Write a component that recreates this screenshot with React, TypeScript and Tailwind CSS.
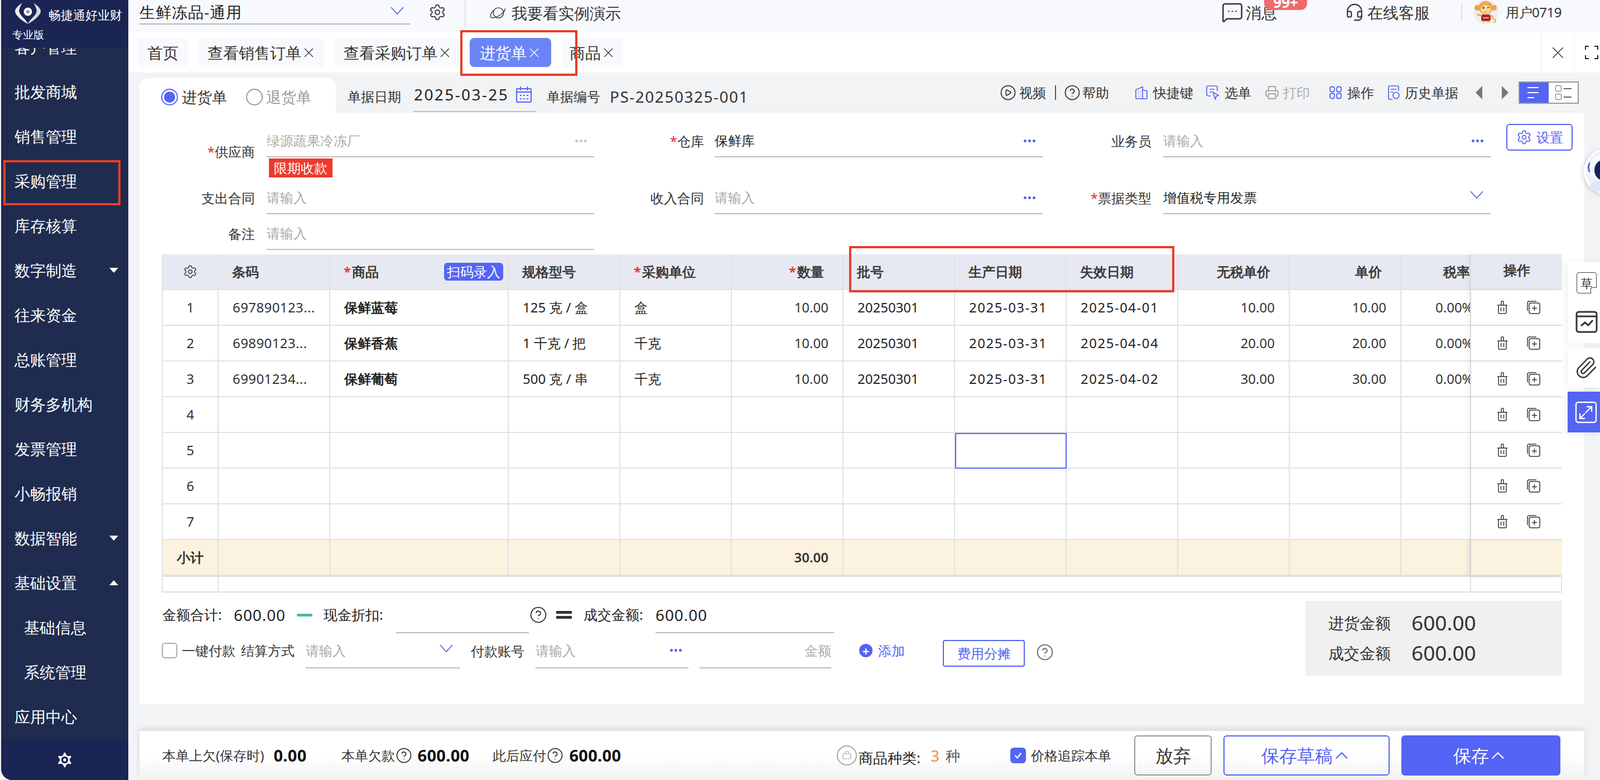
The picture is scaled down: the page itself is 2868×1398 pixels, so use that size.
import * as React from "react";
import {
  ChevronUp,
  CircleHelp,
  CirclePlay,
  Headset,
  MessageSquareMore,
  Paperclip,
  Printer,
  Settings,
} from "lucide-react";

const BLUE = "#5464f5";

const navItems = [
  { label: "客户管理" },
  { label: "批发商城" },
  { label: "销售管理" },
  { label: "采购管理" },
  { label: "库存核算" },
  { label: "数字制造", caret: "down" },
  { label: "往来资金" },
  { label: "总账管理" },
  { label: "财务多机构" },
  { label: "发票管理" },
  { label: "小畅报销" },
  { label: "数据智能", caret: "down" },
  { label: "基础设置", caret: "up" },
  { label: "基础信息", sub: true },
  { label: "系统管理", sub: true },
  { label: "应用中心" },
];

const goods = [
  ["697890123...", "保鲜蓝莓", "125 克 / 盒", "盒", "10.00", "20250301", "2025-03-31", "2025-04-01", "10.00", "10.00", "0.00%"],
  ["69890123...", "保鲜香蕉", "1 千克 / 把", "千克", "10.00", "20250301", "2025-03-31", "2025-04-04", "20.00", "20.00", "0.00%"],
  ["69901234...", "保鲜葡萄", "500 克 / 串", "千克", "10.00", "20250301", "2025-03-31", "2025-04-02", "30.00", "30.00", "0.00%"],
];

const rowGrid =
  "grid h-[64px] grid-cols-[102px_200px_320px_200px_200px_200px_200px_200px_200px_200px_200px_125px_163px]";

function Cross({ className = "h-[17px] w-[17px]" }: { className?: string }) {
  return (
    <svg viewBox="0 0 16 16" className={className} fill="none" stroke="currentColor" strokeWidth="1.2">
      <path d="M1 1L15 15M15 1L1 15" />
    </svg>
  );
}

function Chevron({ className = "" }: { className?: string }) {
  return (
    <svg viewBox="0 0 24 14" className={`h-[14px] w-[24px] ${className}`} fill="none" stroke={BLUE} strokeWidth="1.8">
      <path d="M1 1L12 13L23 1" />
    </svg>
  );
}

function Dots({ gray }: { gray?: boolean }) {
  const dot = `h-[5px] w-[5px] rounded-full ${gray ? "bg-[#c4c7d6]" : "bg-[#5464f5]"}`;
  return (
    <div className="flex gap-[3px]">
      <span className={dot} />
      <span className={dot} />
      <span className={dot} />
    </div>
  );
}

function Help({ className = "h-[32px] w-[32px] text-[#555]" }: { className?: string }) {
  return <CircleHelp className={className} strokeWidth={1.4} />;
}

function Logo() {
  return (
    <svg viewBox="0 0 46 38" className="h-[38px] w-[46px]">
      <path d="M13 0C6 5 0 10 0 15C0 22 12 32 23 38C20 30 12 26 8 18C6 13 9 7 13 0Z" fill="#ececf0" />
      <path d="M33 0C40 5 46 10 46 15C46 22 34 32 23 38C26 30 34 26 38 18C40 13 37 7 33 0Z" fill="#d9d9de" />
      <circle cx="23" cy="16" r="7.5" fill="#f2f2f4" />
      <circle cx="23" cy="16" r="2.6" fill="#7d8296" />
    </svg>
  );
}

function Monkey() {
  return (
    <svg viewBox="0 0 46 46" className="h-[46px] w-[46px]">
      <circle cx="23" cy="23" r="22.5" fill="#eeeeee" />
      <circle cx="7" cy="15" r="5" fill="#e9a544" />
      <circle cx="37" cy="15" r="5" fill="#e9a544" />
      <path d="M33 34C41 34 42 41 36 41" fill="none" stroke="#eba94c" strokeWidth="2.2" />
      <rect x="14" y="27" width="17" height="12" rx="3" fill="#a8282b" />
      <path d="M14 29L8 27M31 29L35 31" stroke="#eba94c" strokeWidth="3" strokeLinecap="round" />
      <rect x="16" y="38" width="4" height="3" fill="#eba94c" />
      <rect x="25" y="38" width="4" height="3" fill="#eba94c" />
      <ellipse cx="22" cy="15" rx="12.5" ry="12" fill="#eba94c" />
      <ellipse cx="22" cy="18" rx="9" ry="8" fill="#f6d79e" />
      <circle cx="18" cy="15" r="1.7" fill="#5a3a2a" />
      <path d="M25 14.5h3.4" stroke="#5a3a2a" strokeWidth="1.4" />
      <path d="M19 22q3 2.4 6 0" fill="#fff" stroke="#b0662c" strokeWidth="0.8" />
      <rect x="17.5" y="32" width="10" height="1.6" fill="#f3d6c8" />
    </svg>
  );
}

function Robot() {
  return (
    <svg viewBox="0 0 82 82" className="h-[82px] w-[82px]">
      <circle cx="41" cy="41" r="39" fill="#eef1fb" stroke="#ffffff" strokeWidth="3" />
      <ellipse cx="11" cy="34" rx="4" ry="9" fill="#4b63d8" />
      <ellipse cx="32" cy="34" rx="22" ry="23" fill="#f8f9ff" />
      <ellipse cx="34" cy="39" rx="15" ry="18" fill="#15245e" />
      <circle cx="38" cy="41" r="6" fill="#55c4fb" />
      <ellipse cx="26" cy="68" rx="15" ry="9" fill="#dfe5f7" />
    </svg>
  );
}

function TrashIcon() {
  return (
    <svg viewBox="0 0 20 24" className="h-[24px] w-[20px]" fill="none" stroke="#333" strokeWidth="1.5">
      <path d="M1 8H19M8 8V2.5a2 2 0 0 1 4 0V8" />
      <path d="M3 8V21a2 2 0 0 0 2 2H15a2 2 0 0 0 2-2V8" />
      <path d="M7.5 12V19M12.5 12V19" />
    </svg>
  );
}

function CopyAddIcon() {
  return (
    <svg viewBox="0 0 24 24" className="h-[24px] w-[24px]" fill="none" stroke="#333" strokeWidth="1.5">
      <rect x="4" y="4" width="19" height="19" rx="3" />
      <path d="M1 18V4a3 3 0 0 1 3-3H17M13.5 9V18M9 13.5H18" />
    </svg>
  );
}

function PlanetIcon() {
  return (
    <svg viewBox="0 0 30 24" className="h-[24px] w-[29px]" fill="none" stroke="#333" strokeWidth="1.5">
      <circle cx="16" cy="11" r="9.5" />
      <path d="M7 6C2 11 0 17 2 19C5 22 14 19 22 13C26 10 29 5 28 3" />
    </svg>
  );
}

function CalendarIcon() {
  return (
    <svg viewBox="0 0 28 30" className="h-[30px] w-[28px]" fill="none" stroke={BLUE} strokeWidth="2">
      <rect x="1" y="5" width="26" height="24" rx="1.5" />
      <path d="M8 1V8M20 1V8M1 11H27" />
      <path d="M7 17H10M13 17H16M19 17H22M7 23H10M13 23H16M19 23H22" />
    </svg>
  );
}

function ShortcutIcon() {
  return (
    <svg viewBox="0 0 22 24" className="h-[24px] w-[22px]" fill="none" stroke={BLUE} strokeWidth="1.7">
      <path d="M1 7L13 1.5V23H3a2 2 0 0 1-2-2ZM13 7L21 9V21a2 2 0 0 1-2 2H13" />
      <path d="M5 10H6M8.5 10H9.5M5 14H6M8.5 14H9.5M5 18H6M8.5 18H9.5" />
    </svg>
  );
}

function PickIcon() {
  return (
    <svg viewBox="0 0 24 26" className="h-[26px] w-[24px]" fill="none" stroke={BLUE} strokeWidth="1.7">
      <path d="M8 19H4a3 3 0 0 1-3-3V4a3 3 0 0 1 3-3H17a3 3 0 0 1 3 3V10" />
      <path d="M6 7H15M6 12H10" />
      <path d="M12 12L22 18L18 19.5L16.5 25Z" />
    </svg>
  );
}

function GridIcon() {
  return (
    <svg viewBox="0 0 22 24" className="h-[24px] w-[22px]" fill="none" stroke={BLUE} strokeWidth="1.8">
      <rect x="1" y="1.5" width="8" height="9" rx="3" />
      <rect x="13" y="1.5" width="8" height="9" rx="3" />
      <rect x="1" y="13.5" width="8" height="9" rx="3" />
      <rect x="13" y="13.5" width="8" height="9" rx="3" />
    </svg>
  );
}

function HistoryIcon() {
  return (
    <svg viewBox="0 0 22 26" className="h-[26px] w-[22px]" fill="none" stroke={BLUE} strokeWidth="1.7">
      <path d="M8 25H3a2 2 0 0 1-2-2V3a2 2 0 0 1 2-2H17a2 2 0 0 1 2 2V10" />
      <path d="M5 7H15M5 12H10" />
      <circle cx="14.5" cy="18" r="5.5" />
    </svg>
  );
}

function CheckMark() {
  return (
    <svg viewBox="0 0 20 20" className="h-[18px] w-[18px]" fill="none" stroke="#fff" strokeWidth="2.6">
      <path d="M4 10L8.5 15L16 5" />
    </svg>
  );
}

function Tab({ label, width, active, close = true }: { label: string; width: string; active?: boolean; close?: boolean }) {
  return (
    <div
      className={`flex h-[52px] items-center gap-[5px] rounded-lg text-[28px] ${width} ${
        active ? "bg-[#6b84f6] text-white" : "bg-[#f7f9fd] text-[#333]"
      }`}
    >
      <span className="whitespace-nowrap">{label}</span>
      {close && <Cross />}
    </div>
  );
}

function Field({
  label,
  required,
  value,
  placeholder,
  trailing,
  labelClass,
  inputClass,
  labelTop,
}: {
  label: string;
  required?: boolean;
  value?: string;
  placeholder?: string;
  trailing?: "dots" | "dim" | "chevron";
  labelClass: string;
  inputClass: string;
  labelTop?: boolean;
}) {
  return (
    <div className="flex items-start">
      <div
        className={`flex h-[42px] items-center justify-end text-[24px] text-[#333] ${labelClass} ${
          labelTop ? "mt-[19px]" : ""
        }`}
      >
        {required && <span className="text-[#f02c1e]">*</span>}
        {label}
      </div>
      <div
        className={`flex h-[50px] items-center justify-between border-b-2 border-[#bdbdbd] pb-[8px] pr-[13px] text-[24px] ${inputClass}`}
      >
        <span className={value ? "text-[#222]" : "text-[#aaa]"}>{value || placeholder}</span>
        {trailing === "dots" && <Dots />}
        {trailing === "dim" && <Dots gray />}
        {trailing === "chevron" && <Chevron className="mb-[10px]" />}
      </div>
    </div>
  );
}

function Cell({
  children,
  className = "",
  first,
}: {
  children?: React.ReactNode;
  className?: string;
  first?: boolean;
}) {
  return (
    <div
      className={`flex items-center overflow-hidden whitespace-nowrap border-b-2 border-r-2 border-[#e2e2e2] ${
        first ? "border-l-2" : ""
      } ${className}`}
    >
      {children}
    </div>
  );
}

function Star() {
  return <span className="mr-[2px] text-[#f02c1e]">*</span>;
}

function GoodsTable() {
  const head = "border-[#c9c9c9] border-b-0 bg-[#e7e9f2] text-[24px] font-semibold text-[#3a3a3a]";
  const left = "pl-[24px]";
  const right = "justify-end pr-[33px]";
  const num = "justify-end pr-[25px] text-[#333]";
  const text = "pl-[25px] text-[#222]";
  const opCell =
    "relative z-10 justify-center gap-[34px] bg-white pl-[6px] shadow-[-6px_0_8px_rgba(0,0,0,0.05)] !border-r-0";
  return (
    <div className="ml-[40px] w-[2510px] text-[24px]">
      <div className={rowGrid}>
        <Cell first className={`${head} justify-center`}>
          <Settings className="h-[26px] w-[26px]" strokeWidth={1.4} />
        </Cell>
        <Cell className={`${head} ${left}`}>条码</Cell>
        <Cell className={`${head} ${left} justify-between !pr-[8px]`}>
          <span>
            <Star />
            商品
          </span>
          <span className="rounded-md bg-[#5464f5] px-[5px] text-[24px] font-normal leading-[32px] text-white">
            扫码录入
          </span>
        </Cell>
        <Cell className={`${head} ${left}`}>规格型号</Cell>
        <Cell className={`${head} ${left}`}>
          <Star />
          采购单位
        </Cell>
        <Cell className={`${head} ${right}`}>
          <Star />
          数量
        </Cell>
        <Cell className={`${head} ${left}`}>批号</Cell>
        <Cell className={`${head} ${left}`}>生产日期</Cell>
        <Cell className={`${head} ${left}`}>失效日期</Cell>
        <Cell className={`${head} ${right}`}>无税单价</Cell>
        <Cell className={`${head} ${right}`}>单价</Cell>
        <Cell className={`${head} justify-end`}>税率</Cell>
        <Cell className={`${head} relative z-10 justify-center !border-r-0 pb-[6px] shadow-[-6px_0_8px_rgba(0,0,0,0.05)]`}>
          操作
        </Cell>
      </div>

      {[0, 1, 2, 3, 4, 5, 6].map((i) => {
        const g = goods[i];
        return (
          <div key={i} className={rowGrid}>
            <Cell first className="justify-center text-[#333]">
              {i + 1}
            </Cell>
            <Cell className={`${text} tracking-[0.4px] !text-[#333]`}>{g?.[0]}</Cell>
            <Cell className={`${text} font-semibold`}>{g?.[1]}</Cell>
            <Cell className={text}>{g?.[2]}</Cell>
            <Cell className={text}>{g?.[3]}</Cell>
            <Cell className={num}>{g?.[4]}</Cell>
            <Cell className={text}>{g?.[5]}</Cell>
            <Cell className={`${text} tracking-[1.5px] ${i === 4 ? "outline-2 -outline-offset-2 outline-[#5464f5]" : ""}`}>
              {g?.[6]}
            </Cell>
            <Cell className={`${text} tracking-[1.5px]`}>{g?.[7]}</Cell>
            <Cell className={num}>{g?.[8]}</Cell>
            <Cell className={num}>{g?.[9]}</Cell>
            <Cell className="text-[#333]">{g && <span className="pl-[61px]">{g[10]}</span>}</Cell>
            <Cell className={opCell}>
              <TrashIcon />
              <CopyAddIcon />
            </Cell>
          </div>
        );
      })}

      <div className={`${rowGrid} bg-[#fbf2e0]`}>
        <Cell first className="justify-center font-semibold text-[#333]">
          小计
        </Cell>
        <Cell />
        <Cell />
        <Cell />
        <Cell />
        <Cell className="justify-end pr-[25px] font-semibold text-[#333]">30.00</Cell>
        <Cell />
        <Cell />
        <Cell />
        <Cell />
        <Cell />
        <Cell />
        <Cell className="relative z-10 !border-r-0 shadow-[-6px_2px_8px_rgba(0,0,0,0.08)]" />
      </div>

      <div className="grid h-[30px] grid-cols-[102px_2245px_163px] border-b-2 border-t-2 border-[#dedede]">
        <div className="border-x-2 border-[#e2e2e2]" />
        <div className="border-r-2 border-[#e2e2e2]" />
        <div className="border-r-2 border-[#e2e2e2]" />
      </div>
    </div>
  );
}

function Settlement() {
  return (
    <div className="mt-[15px] flex pl-[40px] pr-[40px] text-[25px] text-[#222]">
      <div>
        <div className="flex h-[58px] items-start">
          <div className="flex h-[50px] items-center whitespace-nowrap">
            <span className="w-[129px] pl-[1px]">金额合计:</span>
            <span className="text-[28px] tracking-[0.9px]">600.00</span>
            <span className="ml-[20px] h-[5px] w-[28px] rounded-sm bg-[#4db6ac]" />
            <span className="ml-[20px] w-[130px]">现金折扣:</span>
          </div>
          <div className="h-[58px] w-[238px] border-b-2 border-[#bdbdbd]" />
          <div className="flex h-[50px] items-center whitespace-nowrap">
            <Help className="ml-[1px] h-[32px] w-[32px] text-[#333]" />
            <span className="ml-[16px] flex h-[14px] w-[28px] flex-col justify-between">
              <span className="h-[5px] bg-[#333]" />
              <span className="h-[5px] bg-[#333]" />
            </span>
            <span className="ml-[21px] w-[129px]">成交金额:</span>
          </div>
          <div className="flex h-[58px] w-[320px] items-start border-b-2 border-[#bdbdbd]">
            <span className="text-[28px] leading-[50px] tracking-[0.9px]">600.00</span>
          </div>
        </div>
        <div className="flex h-[64px] items-start text-[24px] text-[#333]">
          <div className="flex h-[64px] items-center self-start pb-[2px]">
            <span className="h-[28px] w-[28px] rounded-md border-2 border-[#aaa] bg-white" />
            <span className="ml-[8px] whitespace-nowrap">一键付款</span>
            <span className="ml-[10px] whitespace-nowrap">结算方式</span>
          </div>
          <div className="ml-[20px] flex h-[63px] w-[276px] items-center justify-between border-b-2 border-[#bdbdbd] pr-[12px] text-[#aaa]">
            <span>请输入</span>
            <Chevron className="mb-[8px]" />
          </div>
          <span className="ml-[20px] mt-[14px] whitespace-nowrap">付款账号</span>
          <div className="ml-[20px] flex h-[63px] w-[274px] items-center justify-between border-b-2 border-[#bdbdbd] pr-[12px] text-[#aaa]">
            <span>请输入</span>
            <Dots />
          </div>
          <div className="ml-[20px] flex h-[63px] w-[236px] items-center justify-end border-b-2 border-[#bdbdbd] text-[#aaa]">
            金额
          </div>
          <div className="ml-[50px] mt-[13px] flex items-center gap-[10px] text-[#5464f5]">
            <span className="flex h-[24px] w-[24px] items-center justify-center rounded-full bg-[#5464f5] text-[22px] font-bold leading-none text-white">
              +
            </span>
            添加
          </div>
          <div className="ml-[68px] mt-[12px] flex h-[48px] w-[147px] items-center justify-center rounded-[4px] border-2 border-[#5464f5] text-[#5464f5]">
            费用分摊
          </div>
          <Help className="ml-[20px] mt-[18px] h-[32px] w-[32px] text-[#666]" />
        </div>
      </div>
      <div className="ml-auto flex h-[134px] w-[460px] flex-col justify-center gap-[14px] bg-[#f0f0f0] pb-[2px] pl-[41px] text-[28px] text-[#333]">
        <div className="flex items-center leading-[40px]">
          <span className="w-[149px]">进货金额</span>
          <span className="text-[37px]">600.00</span>
        </div>
        <div className="flex items-center leading-[40px]">
          <span className="w-[149px]">成交金额</span>
          <span className="text-[37px]">600.00</span>
        </div>
      </div>
    </div>
  );
}

function Footer() {
  const amount = "text-[29px] font-bold tracking-[0.3px] text-[#111]";
  const tiny = "h-[30px] w-[30px] text-[#333]";
  return (
    <div className="mt-[48px] flex h-[88px] items-center bg-gradient-to-b from-white from-50% to-[#f1f1f1] pl-[41px] pr-[43px] text-[24px] text-[#333] shadow-[0_-4px_10px_rgba(0,0,0,0.1)]">
      <span className="whitespace-nowrap">本单上欠(保存时)</span>
      <span className={`ml-[17px] ${amount}`}>0.00</span>
      <span className="ml-[62px] whitespace-nowrap">本单欠款</span>
      <Help className={`ml-[1px] ${tiny}`} />
      <span className={`ml-[10px] ${amount}`}>600.00</span>
      <span className="ml-[42px] whitespace-nowrap">此后应付</span>
      <Help className={`ml-[1px] ${tiny}`} />
      <span className={`ml-[10px] ${amount}`}>600.00</span>

      <div className="ml-auto flex h-[36px] w-[36px] items-center justify-center rounded-full border-2 border-[#aaa]">
        <svg viewBox="0 0 16 16" className="h-[16px] w-[16px]" fill="none" stroke="#aaa" strokeWidth="1.2">
          <path d="M1 5H15V14H1ZM5 5V3a3 3 0 0 1 6 0V5" />
        </svg>
      </div>
      <span className="ml-[3px] mt-[8px] whitespace-nowrap text-[26px] text-[#222]">商品种类:</span>
      <span className="ml-[18px] text-[28px] text-[#f08a3c]">3</span>
      <span className="ml-[11px] whitespace-nowrap text-[26px] text-[#555]">种</span>
      <span className="ml-[90px] flex h-[28px] w-[28px] items-center justify-center rounded-md bg-[#5464f5]">
        <CheckMark />
      </span>
      <span className="ml-[9px] whitespace-nowrap">价格追踪本单</span>
      <button className="ml-[41px] h-[72px] w-[139px] rounded-md border-2 border-[#999] bg-transparent text-[32px] text-[#333]">
        放弃
      </button>
      <button className="ml-[21px] flex h-[72px] w-[298px] items-center justify-center rounded-md border-2 border-[#5464f5] text-[32px] text-[#5464f5]">
        保存草稿
        <ChevronUp className="-ml-[3px] h-[38px] w-[38px]" strokeWidth={1.4} />
      </button>
      <button className="ml-[21px] flex h-[72px] w-[285px] items-center justify-center rounded-md bg-[#5464f5] text-[32px] text-white">
        保存
        <ChevronUp className="-ml-[3px] h-[38px] w-[38px]" strokeWidth={1.4} />
      </button>
    </div>
  );
}

export default function App() {
  return (
    <div className="relative flex h-[1398px] w-[2868px] overflow-hidden bg-[#f2f3f5] pl-[2px] font-['Liberation_Sans','Noto_Sans_CJK_SC',sans-serif]">
      <aside className="flex h-full w-[228px] shrink-0 flex-col overflow-hidden rounded-bl-[20px] bg-[#1f2c4f] text-[28px] text-white">
        <div className="relative z-10 h-[86px] shrink-0 bg-[#1a2554] pt-[5px]">
          <div className="flex pl-[25px]">
            <Logo />
            <span className="ml-[14px] mt-[5px] whitespace-nowrap text-[22px]">畅捷通好业财</span>
          </div>
          <div className="pl-[20px] pt-[6px] text-[19px] leading-[26px]">专业版</div>
        </div>
        <div className="flex-1 overflow-hidden">
          <div className="-mt-[42px]">
            {navItems.map((item) => (
              <div
                key={item.label}
                className={`flex h-[80px] items-center justify-between pr-[18px] ${item.sub ? "pl-[41px]" : "pl-[24px]"}`}
              >
                <span className="whitespace-nowrap">{item.label}</span>
                {item.caret === "down" && (
                  <span className="h-0 w-0 border-x-[8px] border-t-[9px] border-x-transparent border-t-white" />
                )}
                {item.caret === "up" && (
                  <span className="h-0 w-0 border-x-[8px] border-b-[9px] border-x-transparent border-b-white" />
                )}
              </div>
            ))}
          </div>
        </div>
        <div className="flex h-[73px] shrink-0 items-center justify-center bg-[#1a2554]">
          <Settings className="h-[36px] w-[36px] fill-white text-[#1a2554]" strokeWidth={2.4} />
        </div>
      </aside>

      <main className="flex min-w-0 flex-1 flex-col">
        <header className="flex h-[58px] shrink-0 items-start bg-[#f7f9fd] pl-[20px] text-[#222]">
          <div className="flex h-[44px] w-[485px] items-center justify-between border-b-2 border-[#b8b8b8] pr-[11px] text-[28px]">
            <span className="tracking-[1px]">生鲜冻品-通用</span>
            <Chevron className="mb-[4px]" />
          </div>
          <Settings className="ml-[33px] mt-[6px] h-[32px] w-[32px] text-[#333]" strokeWidth={1.4} />
          <span className="ml-[33px] h-[50px] w-[2px] bg-[#dfe1e6]" />
          <div className="ml-[43px] flex h-[48px] items-center">
            <PlanetIcon />
            <span className="ml-[10px] whitespace-nowrap text-[27.5px] text-[#333]">我要看实例演示</span>
          </div>
          <div className="ml-auto flex h-[44px] items-center pr-[69px] text-[28px] text-[#333]">
            <MessageSquareMore className="h-[40px] w-[40px]" strokeWidth={1.5} />
            <div className="relative ml-[4px]">
              消息
              <span className="absolute -top-[10px] left-[33px] flex h-[27px] w-[77px] items-end justify-center rounded-b-[12px] bg-[#f06a6a] text-[26px] font-bold leading-[28px] text-white">
                99+
              </span>
            </div>
            <Headset className="ml-[122px] h-[36px] w-[34px]" strokeWidth={1.5} />
            <span className="ml-[6px] whitespace-nowrap">在线客服</span>
            <span className="ml-[56px] h-[32px] w-[2px] bg-[#dfe1e6]" />
            <div className="ml-[20px]">
              <Monkey />
            </div>
            <span className="ml-[12px] whitespace-nowrap text-[24px] tracking-[-0.5px]">用户0719</span>
          </div>
        </header>

        <nav className="flex h-[72px] shrink-0 items-center bg-white pl-[16px] text-[#333]">
          <Tab label="首页" width="w-[91px] pl-[18px]" close={false} />
          <div className="ml-[17px]">
            <Tab label="查看销售订单" width="w-[228px] pl-[18px]" />
          </div>
          <div className="ml-[16px]">
            <Tab label="查看采购订单" width="w-[228px] pl-[18px]" />
          </div>
          <div className="ml-[16px]">
            <Tab label="进货单" width="w-[146px] pl-[18px]" active />
          </div>
          <div className="ml-[20px]">
            <Tab label="商品" width="w-[109px] pl-[13px]" />
          </div>
          <div className="ml-auto flex h-full">
            <div className="flex w-[60px] items-center justify-center border-l-2 border-[#f3f3f5]">
              <Cross className="h-[21px] w-[21px]" />
            </div>
            <div className="flex w-[47px] items-center justify-center border-l-2 border-[#f3f3f5] pl-[15px]">
              <svg viewBox="0 0 24 24" className="h-[24px] w-[24px]" fill="none" stroke="#222" strokeWidth="2">
                <path d="M1 7V1H7M17 1H23V7M23 17V23H17M7 23H1V17" />
              </svg>
            </div>
          </div>
        </nav>

        <div className="flex flex-1 flex-col pl-[20px] pr-[28px]">
          <div className="flex h-[72px] shrink-0 items-center text-[24px] text-[#333]">
            <div className="mt-[10px] flex h-[62px] w-[352px] items-center self-start rounded-t-2xl bg-white pb-[2px] pl-[39px] pt-[8px] text-[27px]">
              <span className="flex h-[30px] w-[30px] items-center justify-center rounded-full border-2 border-[#5464f5]">
                <span className="h-[20px] w-[20px] rounded-full bg-[#5464f5]" />
              </span>
              <span className="ml-[7px]">进货单</span>
              <span className="ml-[34px] h-[30px] w-[30px] rounded-full border-2 border-[#999]" />
              <span className="ml-[6px] text-[#999]">退货单</span>
            </div>
            <span className="ml-[21px] mt-[14px] whitespace-nowrap">单据日期</span>
            <div className="ml-[22px] mt-[8px] flex h-[62px] w-[219px] items-center gap-[13px] border-b-2 border-[#bdbdbd] pl-[1px]">
              <span className="whitespace-nowrap text-[28px] tracking-[2.4px] text-[#222]">2025-03-25</span>
              <CalendarIcon />
            </div>
            <span className="ml-[20px] mt-[14px] whitespace-nowrap">单据编号</span>
            <span className="ml-[17px] mt-[14px] whitespace-nowrap text-[28px] tracking-[1.5px]">PS-20250325-001</span>

            <div className="ml-auto flex items-center whitespace-nowrap pr-[10px]">
              <CirclePlay className="-mx-[2px] h-[30px] w-[30px]" strokeWidth={1.4} />
              <span className="ml-[7px]">视频</span>
              <span className="ml-[16px] h-[26px] w-[2px] bg-[#555]" />
              <CircleHelp className="-mr-[2px] ml-[14px] h-[30px] w-[30px]" strokeWidth={1.4} />
              <span className="ml-[5px]">帮助</span>
              <div className="ml-[47px]">
                <ShortcutIcon />
              </div>
              <span className="ml-[10px]">快捷键</span>
              <div className="ml-[23px]">
                <PickIcon />
              </div>
              <span className="ml-[9px]">选单</span>
              <Printer className="ml-[24px] h-[26px] w-[26px] text-[#999]" strokeWidth={1.6} />
              <span className="ml-[7px] text-[#aaa]">打印</span>
              <div className="ml-[35px]">
                <GridIcon />
              </div>
              <span className="ml-[10px]">操作</span>
              <div className="ml-[25px]">
                <HistoryIcon />
              </div>
              <span className="ml-[8px]">历史单据</span>
              <span className="ml-[31px] h-0 w-0 border-y-[12px] border-r-[12px] border-y-transparent border-r-[#777]" />
              <span className="ml-[35px] h-0 w-0 border-y-[12px] border-l-[12px] border-y-transparent border-l-[#777]" />
              <div className="ml-[18px] flex h-[40px] w-[108px] border-2 border-[#999] bg-white">
                <div className="flex w-[52px] flex-col justify-center gap-[7px] bg-[#5464f5] pl-[14px]">
                  <span className="h-[2px] w-[20px] bg-white" />
                  <span className="h-[2px] w-[20px] bg-white" />
                  <span className="h-[2px] w-[12px] bg-white" />
                </div>
                <div className="flex flex-1 flex-col justify-center gap-[4px] pl-[12px]">
                  <span className="flex items-center gap-[4px]">
                    <span className="h-[11px] w-[11px] rounded-[2px] border border-[#666]" />
                    <span className="h-[2px] w-[14px] bg-[#666]" />
                  </span>
                  <span className="flex items-center gap-[4px]">
                    <span className="h-[11px] w-[11px] rounded-[2px] border border-[#666]" />
                    <span className="h-[2px] w-[14px] bg-[#666]" />
                  </span>
                </div>
              </div>
            </div>
          </div>

          <section className="h-[1060px] shrink-0 bg-white pt-[30px]">
            <div className="relative flex h-[102px] items-start">
              <div className="relative">
                <Field
                  label="供应商"
                  required
                  placeholder="绿源蔬果冷冻厂"
                  trailing="dim"
                  labelTop
                  labelClass="w-[207px]"
                  inputClass="ml-[21px] w-[587px]"
                />
                <span className="absolute left-[232px] top-[52px] bg-[#ee3a2e] px-[9px] text-[23.5px] leading-[34px] text-white">
                  限期收款
                </span>
              </div>
              <Field
                label="仓库"
                required
                value="保鲜库"
                trailing="dots"
                labelClass="w-[197px]"
                inputClass="ml-[19px] w-[588px]"
              />
              <Field
                label="业务员"
                placeholder="请输入"
                trailing="dots"
                labelClass="w-[195px]"
                inputClass="ml-[21px] w-[587px]"
              />
              <button className="ml-[28px] -mt-[10px] flex h-[48px] w-[119px] items-center justify-center gap-[8px] rounded-md border-2 border-[#5464f5] text-[24px] text-[#5464f5]">
                <Settings className="h-[28px] w-[28px]" strokeWidth={1.5} />
                设置
              </button>
            </div>
            <div className="flex h-[64px] items-start">
              <Field label="支出合同" placeholder="请输入" labelClass="w-[207px]" inputClass="ml-[21px] w-[587px]" />
              <Field
                label="收入合同"
                placeholder="请输入"
                trailing="dots"
                labelClass="w-[197px]"
                inputClass="ml-[19px] w-[588px]"
              />
              <Field
                label="票据类型"
                required
                value="增值税专用发票"
                trailing="chevron"
                labelClass="w-[195px]"
                inputClass="ml-[21px] w-[587px]"
              />
            </div>
            <div className="flex h-[58px] items-start">
              <Field label="备注" placeholder="请输入" labelClass="w-[207px]" inputClass="ml-[21px] w-[587px]" />
            </div>
            <GoodsTable />
            <Settlement />
          </section>

          <Footer />
        </div>
      </main>

      {/* 右侧悬浮工具条 */}
      <div className="absolute left-[2810px] top-[470px] flex w-[58px] flex-col gap-[8px] text-[#333]">
        <div className="flex h-[145px] flex-col items-center justify-between bg-white py-[18px] pl-[10px] shadow-[-4px_0_10px_rgba(0,0,0,0.06)]">
          <div className="relative flex h-[38px] w-[36px] items-center justify-center rounded-[4px] border-[1.5px] border-[#444] text-[22px] leading-none">
            草
            <span className="absolute -bottom-[1px] -right-[1px] h-[11px] w-[11px] rounded-tl-[3px] border-l-[1.5px] border-t-[1.5px] border-[#444] bg-white" />
          </div>
          <svg viewBox="0 0 40 40" className="h-[40px] w-[40px]" fill="none" stroke="#333" strokeWidth="3">
            <rect x="2" y="2" width="36" height="36" rx="4" />
            <path d="M2 10H38M10 27L17 21L23 26L31 17" />
          </svg>
        </div>
        <div className="flex h-[71px] items-center justify-center bg-white pl-[8px] shadow-[-4px_0_10px_rgba(0,0,0,0.06)]">
          <Paperclip className="h-[42px] w-[42px] text-[#333]" strokeWidth={1.4} />
        </div>
        <div className="flex h-[73px] items-center justify-center bg-[#5464f5] pl-[8px] shadow-[-4px_2px_10px_rgba(0,0,0,0.08)]">
          <svg viewBox="0 0 40 40" className="h-[40px] w-[40px]" fill="none" stroke="#fff" strokeWidth="2.4">
            <rect x="2" y="2" width="36" height="36" rx="4" />
            <path d="M21 10H30V19M30 10L19 21M9 22V31H18M9 31L18 22" />
          </svg>
        </div>
      </div>

      <div className="absolute left-[2839px] top-[266px] rounded-full shadow-[-2px_2px_10px_rgba(0,0,0,0.15)]">
        <Robot />
      </div>

      {/* 标注红框 */}
      <div className="pointer-events-none absolute left-[6px] top-[287px] h-[81px] w-[210px] border-[4px] border-[#ea3d26]" />
      <div className="pointer-events-none absolute left-[825px] top-[54px] h-[82px] w-[210px] border-[4px] border-[#ea3d26]" />
      <div className="pointer-events-none absolute left-[1522px] top-[441px] h-[83px] w-[583px] border-[4px] border-[#ea3d26]" />
    </div>
  );
}
